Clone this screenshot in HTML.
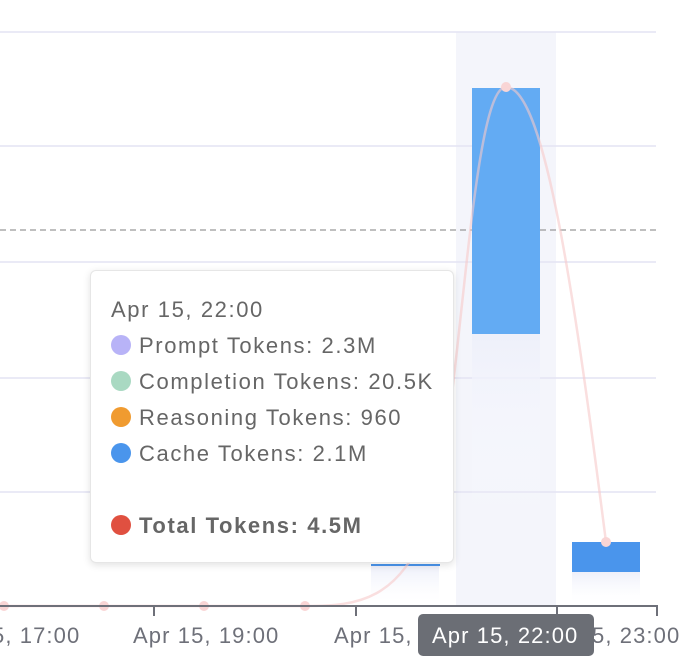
<!DOCTYPE html>
<html><head><style>
body{margin:0;width:698px;height:672px;overflow:hidden;background:#fff;font-family:"Liberation Sans",sans-serif}
svg{position:absolute;left:0;top:0}
.tt{position:absolute;left:90px;top:270px;width:362px;height:291px;background:#fff;border:1px solid #e6e6e6;border-radius:6px;box-shadow:0 2px 8px rgba(0,0,0,.12);color:#666;font-size:22px;letter-spacing:1.6px}
.tt div{position:absolute;left:20px;white-space:nowrap}
.d{display:inline-block;width:20px;height:20px;border-radius:50%;vertical-align:-2px;margin-right:8px}
</style></head><body>
<svg width="698" height="672">
<defs><linearGradient id="g" x1="0" y1="0" x2="0" y2="1"><stop offset="0" stop-color="#eef0fa"/><stop offset="1" stop-color="#fafbff" stop-opacity="0"/></linearGradient></defs>
<rect x="456" y="32" width="100" height="574" fill="#f4f5fb"/>
<g stroke="#e3e3f3" stroke-width="1.5">
<line x1="0" y1="32" x2="656" y2="32"/><line x1="0" y1="146" x2="656" y2="146"/><line x1="0" y1="262" x2="656" y2="262"/><line x1="0" y1="378" x2="656" y2="378"/><line x1="0" y1="492" x2="656" y2="492"/></g>
<line x1="0" y1="230" x2="656" y2="230" stroke="#999" stroke-dasharray="6,4" stroke-width="1.2"/>
<rect x="472" y="334" width="68" height="180" fill="url(#g)"/>
<rect x="472" y="88" width="68" height="246" fill="#63abf3"/>
<rect x="572" y="572" width="68" height="30" fill="url(#g)"/>
<rect x="572" y="542" width="68" height="30" fill="#4a95ec"/>
<rect x="371" y="566" width="68" height="36" fill="url(#g)"/>
<line x1="371" y1="565" x2="440" y2="565" stroke="#4a95ec" stroke-width="2"/>
<path d="M0 606 L305 606 C360 606 400 600 430 520 C460 430 470 87 506 87 C545 87 575 300 606 542" fill="none" stroke="#f7c9c9" stroke-opacity=".6" stroke-width="2.5"/>
<g fill="#f9d5d5"><circle cx="4" cy="606" r="5"/><circle cx="104" cy="606" r="5"/><circle cx="204" cy="606" r="5"/><circle cx="305" cy="606" r="5"/><circle cx="506" cy="87" r="5"/><circle cx="606" cy="542" r="5"/></g>
<g stroke="#6e7079" stroke-width="2"><line x1="0" y1="606" x2="658" y2="606"/><line x1="154" y1="606" x2="154" y2="616"/><line x1="356" y1="606" x2="356" y2="616"/><line x1="557" y1="606" x2="557" y2="616"/><line x1="657" y1="606" x2="657" y2="616"/></g>
<g fill="#6e7079" font-size="22" letter-spacing="1.1" font-family="Liberation Sans,sans-serif">
<text x="-8" y="643">5, 17:00</text>
<text x="133" y="643">Apr 15, 19:00</text>
<text x="334" y="643">Apr 15,</text>
<text x="592" y="643">5, 23:00</text></g>
<rect x="418" y="614" width="176" height="42" rx="5" fill="#6b6e75"/>
<text x="432" y="643" fill="#fff" font-size="22" letter-spacing="1.1" font-family="Liberation Sans,sans-serif">Apr 15, 22:00</text>
</svg>
<div class="tt">
<div style="top:26px">Apr 15, 22:00</div>
<div style="top:62px"><span class="d" style="background:#b8b3f7"></span>Prompt Tokens: 2.3M</div>
<div style="top:98px"><span class="d" style="background:#a9d9c2"></span>Completion Tokens: 20.5K</div>
<div style="top:134px"><span class="d" style="background:#f09b30"></span>Reasoning Tokens: 960</div>
<div style="top:170px"><span class="d" style="background:#4a95ec"></span>Cache Tokens: 2.1M</div>
<div style="top:242px;font-weight:bold"><span class="d" style="background:#e05040"></span>Total Tokens: 4.5M</div>
</div>
</body></html>
